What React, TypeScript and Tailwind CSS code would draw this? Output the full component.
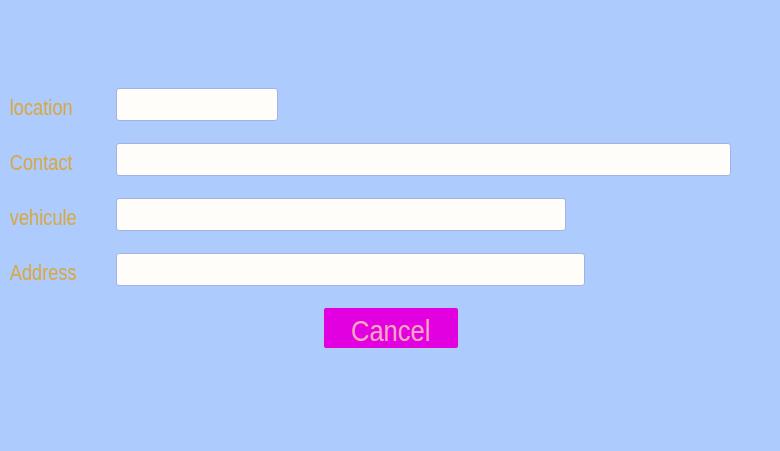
import React from "react";

const rows = [
  { label: "location", w: "w-[162px]" },
  { label: "Contact", w: "w-[615px]" },
  { label: "vehicule", w: "w-[450px]" },
  { label: "Address", w: "w-[469px]" },
];

export default function App() {
  return (
    <div
      className="w-[780px] h-[451px] bg-[#aecbfd] pt-[88px]"
      style={{ fontFamily: '"Liberation Sans Narrow", "Liberation Sans", Arial, sans-serif' }}
    >
      <div className="flex flex-col gap-[22px]">
        {rows.map((r) => (
          <div key={r.label} className="flex items-center">
            <label className="w-[116px] pl-[10px] pt-[6px] text-[22px] leading-none text-[#d6aa47]">
              <span className="inline-block origin-left scale-x-[0.83]">{r.label}</span>
            </label>
            <input
              type="text"
              className={`${r.w} h-[33px] bg-[#fffdf9] border border-[#a3b2e0] rounded-[3px] outline-none`}
            />
          </div>
        ))}
      </div>
      <div className="flex pl-[324px] mt-[22px]">
        <button className="w-[134px] h-[40px] bg-[#e200e0] rounded-[2px] text-[30px] leading-none text-[#f9a8bc] pt-[5px]">
          <span className="inline-block scale-x-[0.85]">Cancel</span>
        </button>
      </div>
    </div>
  );
}
